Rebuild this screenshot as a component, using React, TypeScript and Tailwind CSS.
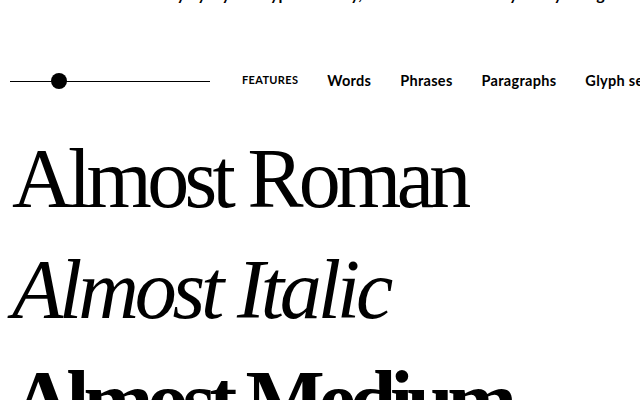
const navItems = ["Words", "Phrases", "Paragraphs", "Glyph set"];

const App = () => {
  return (
    <div className="h-[400px] w-[640px] overflow-hidden bg-white text-black">
      {/* cut-off intro line, only descenders peek in */}
      <div
        className="mt-[-16px] h-[20px] whitespace-nowrap pl-[60px] text-[16px] font-bold leading-[20px]"
        style={{ fontFamily: "Lato, 'Liberation Sans', sans-serif" }}
      >
        Almost is a family by Hybrid Type Foundry, drawn &amp; mastered by Jenny Lindgren for Designing
      </div>

      {/* slider + nav */}
      <div className="mt-[67px] flex h-[20px] items-center">
        <div className="relative ml-[10px] h-[20px] w-[200px] shrink-0">
          <div className="absolute left-0 right-0 top-[10px] h-[1px] bg-black" />
          <div className="absolute left-[41px] top-[2px] h-[16px] w-[16px] rounded-full bg-black" />
        </div>
        <nav
          className="ml-[32px] mt-[-1px] flex items-center gap-[29px] whitespace-nowrap font-bold"
          style={{ fontFamily: "Lato, 'Liberation Sans', sans-serif" }}
        >
          <span className="text-[11px] uppercase tracking-[0.03em]">Features</span>
          {navItems.map((item) => (
            <span key={item} className="text-[14.5px] tracking-[0.02em]">
              {item}
            </span>
          ))}
        </nav>
      </div>

      {/* specimen lines */}
      <div
        className="mt-[32px] whitespace-nowrap pl-[12px] text-[84px] leading-[111px]"
        style={{ fontFamily: "'Liberation Serif', serif" }}
      >
        <div className="tracking-[-0.056em]">Almost Roman</div>
        <div className="italic tracking-[-0.05em]">Almost Italic</div>
        <div className="font-bold tracking-[-0.075em]">Almost Medium</div>
      </div>
    </div>
  );
};

export default App;
